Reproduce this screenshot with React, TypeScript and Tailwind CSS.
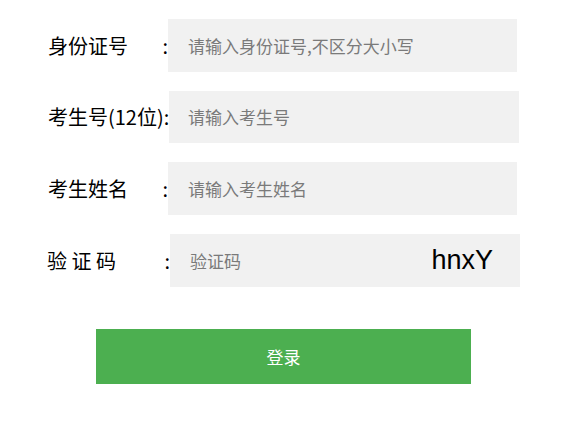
import React from "react";

const cjk = { fontFamily: '"Microsoft YaHei", "Noto Sans CJK SC", "Noto Sans", sans-serif' };

function Row({
  label,
  placeholder,
  labelW,
  labelPl,
  mt,
  inputW,
  children,
}: {
  label: string;
  placeholder: string;
  labelW: string;
  labelPl: string;
  mt: string;
  inputW: string;
  children?: React.ReactNode;
}) {
  return (
    <div className={`flex items-center ${mt}`}>
      <div className={`flex shrink-0 items-center justify-between text-[20px] leading-none text-black ${labelW} ${labelPl}`}>
        <span className="whitespace-pre">{label}</span>
        <span>:</span>
      </div>
      <div className={`flex h-[53px] shrink-0 items-center justify-between bg-[#f1f1f1] pl-[20px] ${inputW}`}>
        <span className="text-[17px] text-[#7a7a7a]">{placeholder}</span>
        {children}
      </div>
    </div>
  );
}

export default function App() {
  return (
    <div className="h-[422px] w-[561px] bg-white pt-[19px]" style={cjk}>
      <div className="pl-[47px]">
        <Row label="身份证号" placeholder="请输入身份证号,不区分大小写" labelW="w-[121px]" labelPl="pl-[1px]" mt="mt-0" inputW="w-[349px]" />
        <div className={`flex items-center mt-[19px]`}>
          <div className="shrink-0 w-[122px] pl-[1px] text-[20px] leading-none text-black whitespace-pre">考生号(12位):</div>
          <div className="flex h-[52px] w-[350px] shrink-0 items-center bg-[#f1f1f1] pl-[19px]">
            <span className="text-[17px] text-[#7a7a7a]">请输入考生号</span>
          </div>
        </div>
        <Row label="考生姓名" placeholder="请输入考生姓名" labelW="w-[121px]" labelPl="pl-[1px]" mt="mt-[19px]" inputW="w-[349px]" />
        <Row label="验 证 码" placeholder="验证码" labelW="w-[123px]" labelPl="pl-0" mt="mt-[19px]" inputW="w-[350px]">
          <span
            className="pr-[27px] text-[27px] leading-none text-black"
            style={{ fontFamily: '"Liberation Sans", Arial, sans-serif' }}
          >
            hnxY
          </span>
        </Row>
      </div>
      <div className="mt-[42px] flex pl-[96px]">
        <button className="h-[55px] w-[375px] bg-[#4caf50] text-[17px] text-white">登录</button>
      </div>
    </div>
  );
}
